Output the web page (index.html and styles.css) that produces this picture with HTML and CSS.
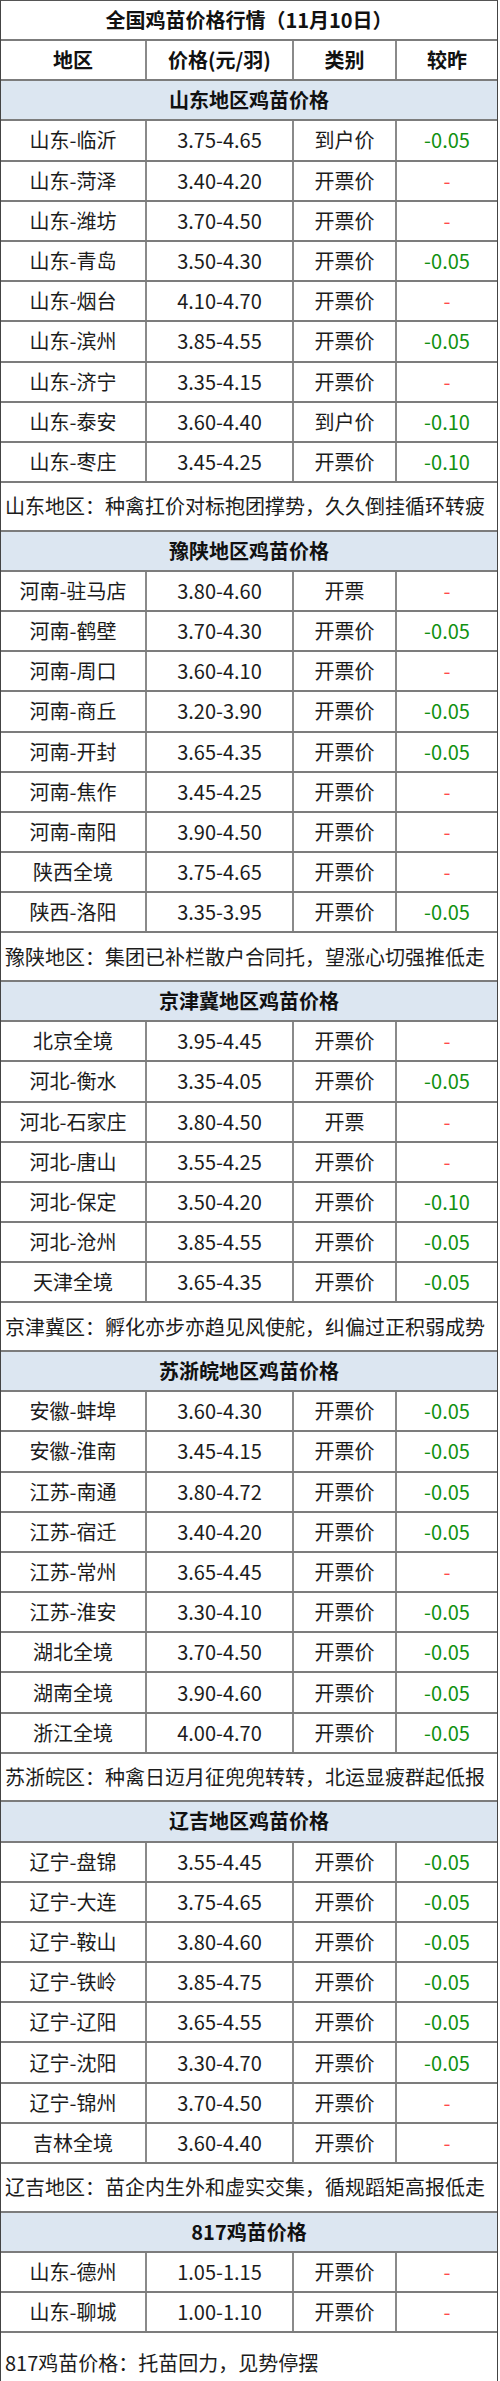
FILE: index.html
```html
<!DOCTYPE html>
<html lang="zh-CN">
<head>
<meta charset="utf-8">
<title>全国鸡苗价格行情</title>
<link rel="stylesheet" href="styles.css">
</head>
<body>
<div class="sheet">
  <div class="row title">全国鸡苗价格行情（11月10日）</div>
  <div class="row grid head"><div class="c">地区</div><div class="c">价格(元/羽)</div><div class="c">类别</div><div class="c">较昨</div></div>

  <div class="row sec">山东地区鸡苗价格</div>
  <div class="row grid"><div class="c">山东-临沂</div><div class="c">3.75-4.65</div><div class="c">到户价</div><div class="c dn">-0.05</div></div>
  <div class="row grid"><div class="c">山东-菏泽</div><div class="c">3.40-4.20</div><div class="c">开票价</div><div class="c eq">-</div></div>
  <div class="row grid"><div class="c">山东-潍坊</div><div class="c">3.70-4.50</div><div class="c">开票价</div><div class="c eq">-</div></div>
  <div class="row grid"><div class="c">山东-青岛</div><div class="c">3.50-4.30</div><div class="c">开票价</div><div class="c dn">-0.05</div></div>
  <div class="row grid"><div class="c">山东-烟台</div><div class="c">4.10-4.70</div><div class="c">开票价</div><div class="c eq">-</div></div>
  <div class="row grid"><div class="c">山东-滨州</div><div class="c">3.85-4.55</div><div class="c">开票价</div><div class="c dn">-0.05</div></div>
  <div class="row grid"><div class="c">山东-济宁</div><div class="c">3.35-4.15</div><div class="c">开票价</div><div class="c eq">-</div></div>
  <div class="row grid"><div class="c">山东-泰安</div><div class="c">3.60-4.40</div><div class="c">到户价</div><div class="c dn">-0.10</div></div>
  <div class="row grid"><div class="c">山东-枣庄</div><div class="c">3.45-4.25</div><div class="c">开票价</div><div class="c dn">-0.10</div></div>
  <div class="row note">山东地区：种禽扛价对标抱团撑势，久久倒挂循环转疲</div>

  <div class="row sec">豫陕地区鸡苗价格</div>
  <div class="row grid"><div class="c">河南-驻马店</div><div class="c">3.80-4.60</div><div class="c">开票</div><div class="c eq">-</div></div>
  <div class="row grid"><div class="c">河南-鹤壁</div><div class="c">3.70-4.30</div><div class="c">开票价</div><div class="c dn">-0.05</div></div>
  <div class="row grid"><div class="c">河南-周口</div><div class="c">3.60-4.10</div><div class="c">开票价</div><div class="c eq">-</div></div>
  <div class="row grid"><div class="c">河南-商丘</div><div class="c">3.20-3.90</div><div class="c">开票价</div><div class="c dn">-0.05</div></div>
  <div class="row grid"><div class="c">河南-开封</div><div class="c">3.65-4.35</div><div class="c">开票价</div><div class="c dn">-0.05</div></div>
  <div class="row grid"><div class="c">河南-焦作</div><div class="c">3.45-4.25</div><div class="c">开票价</div><div class="c eq">-</div></div>
  <div class="row grid"><div class="c">河南-南阳</div><div class="c">3.90-4.50</div><div class="c">开票价</div><div class="c eq">-</div></div>
  <div class="row grid"><div class="c">陕西全境</div><div class="c">3.75-4.65</div><div class="c">开票价</div><div class="c eq">-</div></div>
  <div class="row grid"><div class="c">陕西-洛阳</div><div class="c">3.35-3.95</div><div class="c">开票价</div><div class="c dn">-0.05</div></div>
  <div class="row note">豫陕地区：集团已补栏散户合同托，望涨心切强推低走</div>

  <div class="row sec">京津冀地区鸡苗价格</div>
  <div class="row grid"><div class="c">北京全境</div><div class="c">3.95-4.45</div><div class="c">开票价</div><div class="c eq">-</div></div>
  <div class="row grid"><div class="c">河北-衡水</div><div class="c">3.35-4.05</div><div class="c">开票价</div><div class="c dn">-0.05</div></div>
  <div class="row grid"><div class="c">河北-石家庄</div><div class="c">3.80-4.50</div><div class="c">开票</div><div class="c eq">-</div></div>
  <div class="row grid"><div class="c">河北-唐山</div><div class="c">3.55-4.25</div><div class="c">开票价</div><div class="c eq">-</div></div>
  <div class="row grid"><div class="c">河北-保定</div><div class="c">3.50-4.20</div><div class="c">开票价</div><div class="c dn">-0.10</div></div>
  <div class="row grid"><div class="c">河北-沧州</div><div class="c">3.85-4.55</div><div class="c">开票价</div><div class="c dn">-0.05</div></div>
  <div class="row grid"><div class="c">天津全境</div><div class="c">3.65-4.35</div><div class="c">开票价</div><div class="c dn">-0.05</div></div>
  <div class="row note">京津冀区：孵化亦步亦趋见风使舵，纠偏过正积弱成势</div>

  <div class="row sec">苏浙皖地区鸡苗价格</div>
  <div class="row grid"><div class="c">安徽-蚌埠</div><div class="c">3.60-4.30</div><div class="c">开票价</div><div class="c dn">-0.05</div></div>
  <div class="row grid"><div class="c">安徽-淮南</div><div class="c">3.45-4.15</div><div class="c">开票价</div><div class="c dn">-0.05</div></div>
  <div class="row grid"><div class="c">江苏-南通</div><div class="c">3.80-4.72</div><div class="c">开票价</div><div class="c dn">-0.05</div></div>
  <div class="row grid"><div class="c">江苏-宿迁</div><div class="c">3.40-4.20</div><div class="c">开票价</div><div class="c dn">-0.05</div></div>
  <div class="row grid"><div class="c">江苏-常州</div><div class="c">3.65-4.45</div><div class="c">开票价</div><div class="c eq">-</div></div>
  <div class="row grid"><div class="c">江苏-淮安</div><div class="c">3.30-4.10</div><div class="c">开票价</div><div class="c dn">-0.05</div></div>
  <div class="row grid"><div class="c">湖北全境</div><div class="c">3.70-4.50</div><div class="c">开票价</div><div class="c dn">-0.05</div></div>
  <div class="row grid"><div class="c">湖南全境</div><div class="c">3.90-4.60</div><div class="c">开票价</div><div class="c dn">-0.05</div></div>
  <div class="row grid"><div class="c">浙江全境</div><div class="c">4.00-4.70</div><div class="c">开票价</div><div class="c dn">-0.05</div></div>
  <div class="row note">苏浙皖区：种禽日迈月征兜兜转转，北运显疲群起低报</div>

  <div class="row sec">辽吉地区鸡苗价格</div>
  <div class="row grid"><div class="c">辽宁-盘锦</div><div class="c">3.55-4.45</div><div class="c">开票价</div><div class="c dn">-0.05</div></div>
  <div class="row grid"><div class="c">辽宁-大连</div><div class="c">3.75-4.65</div><div class="c">开票价</div><div class="c dn">-0.05</div></div>
  <div class="row grid"><div class="c">辽宁-鞍山</div><div class="c">3.80-4.60</div><div class="c">开票价</div><div class="c dn">-0.05</div></div>
  <div class="row grid"><div class="c">辽宁-铁岭</div><div class="c">3.85-4.75</div><div class="c">开票价</div><div class="c dn">-0.05</div></div>
  <div class="row grid"><div class="c">辽宁-辽阳</div><div class="c">3.65-4.55</div><div class="c">开票价</div><div class="c dn">-0.05</div></div>
  <div class="row grid"><div class="c">辽宁-沈阳</div><div class="c">3.30-4.70</div><div class="c">开票价</div><div class="c dn">-0.05</div></div>
  <div class="row grid"><div class="c">辽宁-锦州</div><div class="c">3.70-4.50</div><div class="c">开票价</div><div class="c eq">-</div></div>
  <div class="row grid"><div class="c">吉林全境</div><div class="c">3.60-4.40</div><div class="c">开票价</div><div class="c eq">-</div></div>
  <div class="row note">辽吉地区：苗企内生外和虚实交集，循规蹈矩高报低走</div>

  <div class="row sec">817鸡苗价格</div>
  <div class="row grid"><div class="c">山东-德州</div><div class="c">1.05-1.15</div><div class="c">开票价</div><div class="c eq">-</div></div>
  <div class="row grid"><div class="c">山东-聊城</div><div class="c">1.00-1.10</div><div class="c">开票价</div><div class="c eq">-</div></div>
  <div class="row note last">817鸡苗价格：托苗回力，见势停摆</div>
</div>
</body>
</html>
```

FILE: styles.css
```css
html, body {
  margin: 0;
  padding: 0;
  background: #ffffff;
}

body {
  font-family: "Noto Sans CJK SC", "Microsoft YaHei", sans-serif;
  font-size: 20px;
  color: #1c1c1c;
}

.sheet {
  width: 498px;
  box-sizing: border-box;
  border-top: 1px solid #555;
  border-left: 1px solid #444;
  border-right: 1px solid #444;
}

.row {
  box-sizing: border-box;
  height: 40.2px;
  border-bottom: 2px solid #7c7c7c;
  display: flex;
  align-items: center;
  justify-content: center;
  line-height: 1;
}

.title {
  font-weight: bold;
  color: #111;
  height: 40px;
}

.grid {
  display: grid;
  grid-template-columns: 146px 147px 103px 1fr;
  align-items: stretch;
  justify-content: stretch;
}

.c {
  display: flex;
  align-items: center;
  justify-content: center;
  border-right: 2px solid #8a8a8a;
  white-space: nowrap;
}

.c:last-child {
  border-right: none;
}

.head {
  font-weight: bold;
  color: #111;
}

.sec {
  background: #dce6f1;
  font-weight: bold;
  color: #111;
}

.note {
  height: 48.5px;
  justify-content: flex-start;
  padding-left: 4px;
  white-space: nowrap;
}

.note.last {
  height: 60px;
  border-bottom: none;
}

.dn {
  color: #119111;
}

.eq {
  color: #ff4a4a;
}
```
